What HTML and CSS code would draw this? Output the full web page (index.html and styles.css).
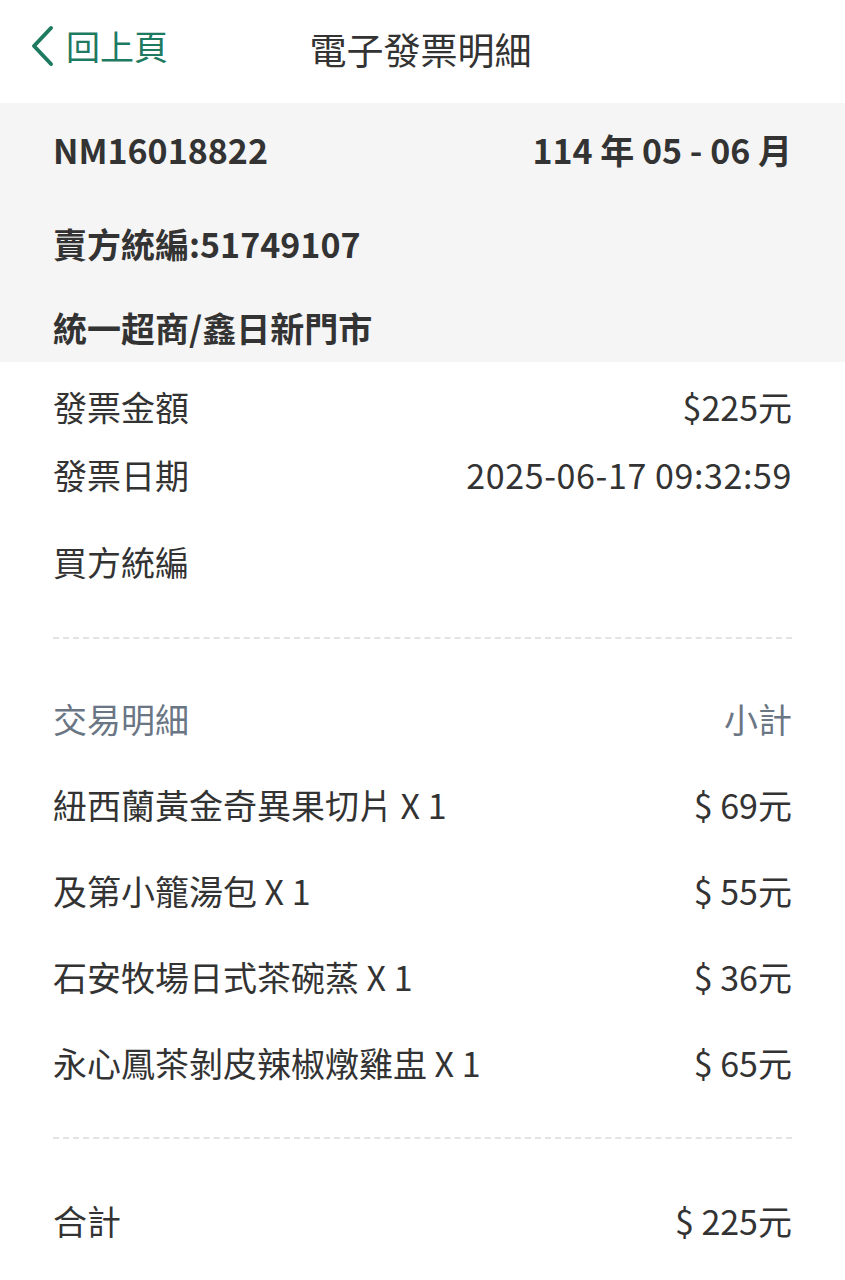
FILE: index.html
```html
<!DOCTYPE html>
<html lang="zh-Hant">
<head>
    <meta charset="UTF-8">
    <title>電子發票明細</title>
    <link rel="stylesheet" href="styles.css">
</head>
<body>
<header class="topbar">
    <a class="back" href="#">
        <svg class="chevron" width="26" height="42" viewBox="0 0 26 42">
            <polyline points="21,3 4,21 21,39" fill="none" stroke="#1e7a60" stroke-width="4" stroke-linecap="round" stroke-linejoin="round"/>
        </svg>
        <span>回上頁</span>
    </a>
    <h1 class="title">電子發票明細</h1>
    <div></div>
</header>

<section class="summary">
    <div class="summary-row first">
        <span>NM16018822</span>
        <span>114 年 05 - 06 月</span>
    </div>
    <div class="summary-row second">
        <span>賣方統編:51749107</span>
    </div>
    <div class="summary-row third">
        <span>統一超商/鑫日新門市</span>
    </div>
</section>

<section class="info">
    <div class="row">
        <span>發票金額</span>
        <span>$225元</span>
    </div>
    <div class="row">
        <span>發票日期</span>
        <span class="date">2025-06-17 09:32:59</span>
    </div>
    <div class="row buyer">
        <span>買方統編</span>
        <span></span>
    </div>

    <hr class="dash">

    <div class="row head">
        <span>交易明細</span>
        <span>小計</span>
    </div>
    <div class="row item">
        <span>紐西蘭黃金奇異果切片 X 1</span>
        <span>$ 69元</span>
    </div>
    <div class="row item">
        <span>及第小籠湯包 X 1</span>
        <span>$ 55元</span>
    </div>
    <div class="row item">
        <span>石安牧場日式茶碗蒸 X 1</span>
        <span>$ 36元</span>
    </div>
    <div class="row item">
        <span>永心鳳茶剝皮辣椒燉雞盅 X 1</span>
        <span>$ 65元</span>
    </div>

    <hr class="dash bottom">

    <div class="row total">
        <span>合計</span>
        <span>$ 225元</span>
    </div>
</section>
</body>
</html>
```

FILE: styles.css
```css
body {
    margin: 0;
    background: #ffffff;
    color: #333333;
    font-family: "Noto Sans CJK TC", "Noto Sans", sans-serif;
}

.topbar {
    height: 103px;
    display: grid;
    grid-template-columns: 1fr auto 1fr;
    align-items: center;
    padding: 0 30px;
}

.back {
    display: flex;
    align-items: center;
    gap: 10px;
    color: #1e7a60;
    text-decoration: none;
    font-size: 34px;
    margin-top: -12px;
}

.chevron {
    display: block;
}

.title {
    margin: -6px 0 0 -4px;
    font-size: 37px;
    font-weight: 400;
    color: #333333;
}

.summary {
    background: #f5f5f5;
    padding: 0 53px;
    height: 259px;
    font-weight: 700;
    font-size: 34px;
}

.summary-row {
    display: flex;
    justify-content: space-between;
    height: 48px;
    align-items: center;
}

.summary-row.first {
    padding-top: 22px;
}

.summary-row.second {
    margin-top: 46px;
}

.summary-row.third {
    margin-top: 36px;
}

.info {
    padding: 10px 53px 0;
    font-size: 34px;
}

.row {
    display: flex;
    justify-content: space-between;
    align-items: center;
    height: 68px;
}

.date {
    letter-spacing: 0.6px;
}

.row.buyer {
    margin-top: 19px;
}

.dash {
    border: none;
    border-top: 2px dashed #e3e3e3;
    margin: 42px 0 36px;
}

.dash.bottom {
    margin: 32px 0 38px;
}

.row.head,
.row.item,
.row.total {
    height: 86px;
}

.row.head {
    color: #6b7685;
}
```
